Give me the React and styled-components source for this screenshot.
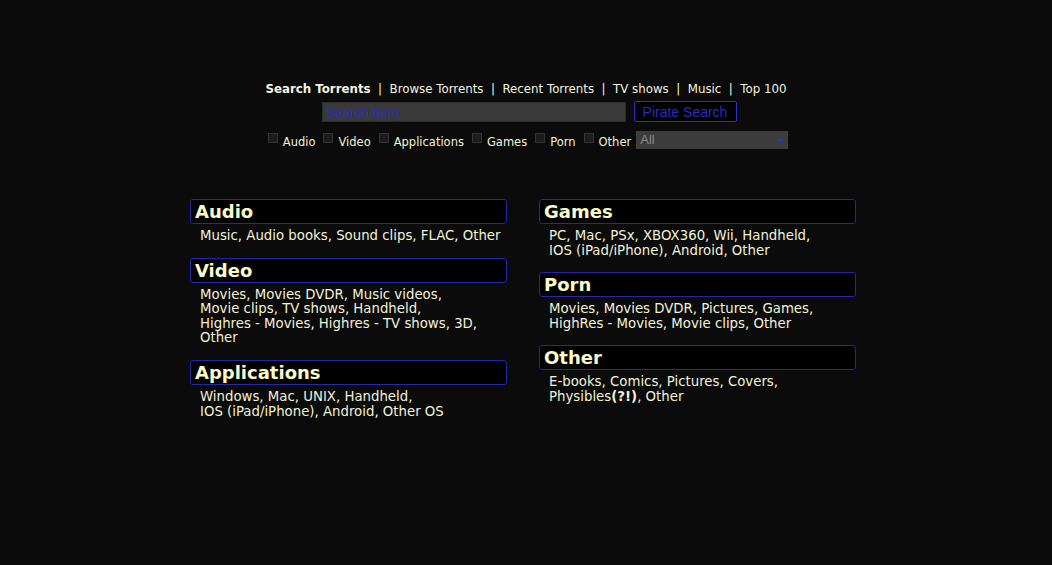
import React from 'react';
import styled, { createGlobalStyle } from 'styled-components';

const GlobalStyle = createGlobalStyle`
	html, body {
		margin: 0;
		padding: 0;
		background: #0b0b0b;
	}
	body {
		font-family: 'DejaVu Sans', Verdana, sans-serif;
		color: #f2f2d8;
	}
`;

const Page = styled.div`
	min-height: 565px;
	padding-top: 80px;
	box-sizing: border-box;
`;

const Header = styled.header`
	display: flex;
	flex-direction: column;
	align-items: center;
`;

const Nav = styled.nav`
	display: flex;
	align-items: center;
	font-size: 11.8px;
	line-height: 16px;
	color: #f4f4e0;
	margin-top: 1px;

	a {
		color: inherit;
		text-decoration: none;
	}
`;

const NavLink = styled.a`
	font-weight: ${(p) => (p.$active ? 700 : 400)};
`;

const Sep = styled.span`
	margin: 0 7.5px;
`;

const SearchRow = styled.form`
	display: flex;
	align-items: center;
	gap: 8px;
	margin-top: 5px;
	margin-left: 6px;
`;

const SearchInput = styled.input`
	width: 304px;
	height: 20px;
	box-sizing: border-box;
	border: 1px solid #2a2a2a;
	background: #3a3a3a;
	color: #2b2bc0;
	font-family: 'Liberation Sans', Arial, sans-serif;
	font-size: 13.5px;
	padding: 1px 4px;

	&::placeholder {
		color: #2b2bc0;
	}
`;

const SearchButton = styled.button`
	width: 103px;
	height: 21px;
	box-sizing: border-box;
	background: #000;
	border: 1px solid #3030c8;
	border-radius: 2px;
	color: #2b2bc0;
	font-family: 'Liberation Sans', Arial, sans-serif;
	font-size: 14px;
	padding: 0;
	margin-top: -1px;
`;

const FilterRow = styled.div`
	display: flex;
	align-items: center;
	margin-top: 9px;
	font-size: 11.5px;
	color: #f2f2d8;
	margin-left: 4px;
`;

const CheckLabel = styled.label`
	display: flex;
	align-items: center;
	margin-right: 8px;
	padding-top: 4px;
`;

const Check = styled.input.attrs({ type: 'checkbox' })`
	appearance: none;
	width: 10px;
	height: 10px;
	margin: -8px 5px 0 0;
	background: #1c1c1c;
	border: 1px solid #333;
	box-sizing: border-box;
`;

const SelectBox = styled.div`
	position: relative;
	width: 152px;
	height: 18px;
	background: #3c3c3c;
	color: #8a8a8a;
	font-family: 'Liberation Sans', Arial, sans-serif;
	font-size: 13px;
	line-height: 18px;
	padding-left: 4px;
	box-sizing: border-box;
	margin-left: -3px;
`;

const Arrow = styled.span`
	position: absolute;
	right: 5px;
	top: 8px;
	width: 6px;
	height: 2px;
	background: #3030d0;
`;

const Columns = styled.main`
	display: grid;
	grid-template-columns: 317px 317px;
	column-gap: 32px;
	width: 666px;
	margin: 50px auto 0;
	position: relative;
	left: -3px;
`;

const Column = styled.div`
	display: flex;
	flex-direction: column;
`;

const Category = styled.section`
	margin-bottom: 14px;
`;

const Title = styled.h2`
	margin: 0;
	height: 25px;
	box-sizing: border-box;
	background: #000;
	border: 1px solid #2626a8;
	border-radius: 3px;
	padding-left: 4px;
	font-size: 18px;
	font-weight: 700;
	line-height: 23px;
	color: #fbfbc8;
`;

const Subs = styled.p`
	margin: 5px 0 0;
	padding-left: 10px;
	padding-right: 2px;
	font-size: 13.3px;
	line-height: 14.6px;
	color: #f2f2d8;

	b {
		font-weight: 700;
	}
`;

const Item = styled.span`
	white-space: nowrap;
`;

const left = [
	{ title: 'Audio', subs: ['Music', 'Audio books', 'Sound clips', 'FLAC', 'Other'] },
	{
		title: 'Video',
		subs: [
			'Movies',
			'Movies DVDR',
			'Music videos',
			'Movie clips',
			'TV shows',
			'Handheld',
			'Highres - Movies',
			'Highres - TV shows',
			'3D',
			'Other',
		],
	},
	{
		title: 'Applications',
		subs: ['Windows', 'Mac', 'UNIX', 'Handheld', 'IOS (iPad/iPhone)', 'Android', 'Other OS'],
	},
];

const right = [
	{
		title: 'Games',
		subs: ['PC', 'Mac', 'PSx', 'XBOX360', 'Wii', 'Handheld', 'IOS (iPad/iPhone)', 'Android', 'Other'],
	},
	{
		title: 'Porn',
		subs: ['Movies', 'Movies DVDR', 'Pictures', 'Games', 'HighRes - Movies', 'Movie clips', 'Other'],
	},
	{
		title: 'Other',
		subs: [
			'E-books',
			'Comics',
			'Pictures',
			'Covers',
			<>
				Physibles<b>(?!)</b>
			</>,
			'Other',
		],
	},
];

const filters = ['Audio', 'Video', 'Applications', 'Games', 'Porn', 'Other'];

function CategoryList({ items }) {
	return items.map((c) => (
		<Category key={c.title}>
			<Title>{c.title}</Title>
			<Subs>
				{c.subs.map((s, i) => (
					<React.Fragment key={i}>
						<Item>
							{s}
							{i < c.subs.length - 1 ? ',' : ''}
						</Item>
						{i < c.subs.length - 1 ? ' ' : ''}
					</React.Fragment>
				))}
			</Subs>
		</Category>
	));
}

export default function App() {
	return (
		<>
			<GlobalStyle />
			<Page>
				<Header>
					<Nav>
						<NavLink $active href="#">Search Torrents</NavLink>
						<Sep>|</Sep>
						<NavLink href="#">Browse Torrents</NavLink>
						<Sep>|</Sep>
						<NavLink href="#">Recent Torrents</NavLink>
						<Sep>|</Sep>
						<NavLink href="#">TV shows</NavLink>
						<Sep>|</Sep>
						<NavLink href="#">Music</NavLink>
						<Sep>|</Sep>
						<NavLink href="#">Top 100</NavLink>
					</Nav>
					<SearchRow onSubmit={(e) => e.preventDefault()}>
						<SearchInput placeholder="Search here" />
						<SearchButton type="submit">Pirate Search</SearchButton>
					</SearchRow>
					<FilterRow>
						{filters.map((f) => (
							<CheckLabel key={f}>
								<Check />
								{f}
							</CheckLabel>
						))}
						<SelectBox>
							All
							<Arrow />
						</SelectBox>
					</FilterRow>
				</Header>
				<Columns>
					<Column>
						<CategoryList items={left} />
					</Column>
					<Column>
						<CategoryList items={right} />
					</Column>
				</Columns>
			</Page>
		</>
	);
}
